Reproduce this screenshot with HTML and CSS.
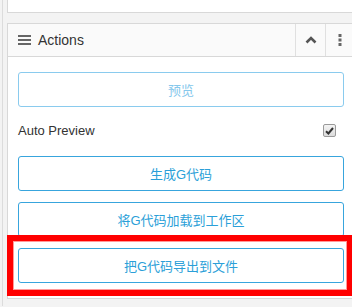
FILE: index.html
```html
<!DOCTYPE html>
<html lang="en">
<head>
    <meta charset="UTF-8">
    <meta name="viewport" content="width=device-width, initial-scale=1.0">
    <title>Actions</title>
    <link rel="stylesheet" href="styles.css">
</head>
<body>
    <div class="wrap">
        <div class="panel panel-top"></div>

        <div class="panel">
            <div class="panel-head">
                <div class="panel-title">
                    <svg class="hamburger" width="13" height="10" viewBox="0 0 13 10">
                        <rect x="0" y="0" width="13" height="2" fill="#666"/>
                        <rect x="0" y="4" width="13" height="2" fill="#666"/>
                        <rect x="0" y="8" width="13" height="2" fill="#666"/>
                    </svg>
                    <span>Actions</span>
                </div>
                <div class="head-btn">
                    <svg width="12" height="8" viewBox="0 0 12 8">
                        <path d="M1.5 6.5 L6 2 L10.5 6.5" fill="none" stroke="#555" stroke-width="2.6"/>
                    </svg>
                </div>
                <div class="head-btn">
                    <svg width="4" height="12" viewBox="0 0 4 12">
                        <rect x="0.5" y="0" width="3" height="3" fill="#666"/>
                        <rect x="0.5" y="4.5" width="3" height="3" fill="#666"/>
                        <rect x="0.5" y="9" width="3" height="3" fill="#666"/>
                    </svg>
                </div>
            </div>
            <div class="panel-body">
                <button class="btn btn-disabled">预览</button>
                <div class="check-row">
                    <span>Auto Preview</span>
                    <span class="checkbox">
                        <svg width="9" height="8" viewBox="0 0 9 8">
                            <path d="M1 4.2 L3.4 6.5 L8 1" fill="none" stroke="#333" stroke-width="2"/>
                        </svg>
                    </span>
                </div>
                <button class="btn">生成G代码</button>
                <button class="btn">将G代码加载到工作区</button>
                <button class="btn">把G代码导出到文件</button>
            </div>
        </div>
    </div>

    <div class="highlight"></div>
</body>
</html>
```

FILE: styles.css
```css
body {
    margin: 0;
    background-color: #f3f3f3;
    font-family: 'Liberation Sans', 'Noto Sans CJK SC', sans-serif;
    color: #333;
    overflow: hidden;
}
.wrap {
    margin-left: 2px;
    border-left: 1px solid #dcdcdc;
    padding-left: 4px;
    height: 307px;
}
.panel {
    width: 346px;
    background-color: #fff;
    border: 1px solid #d8d8d8;
}
.panel-top {
    height: 12px;
    margin-top: -1px;
    margin-bottom: 10px;
}
.panel-head {
    display: flex;
    height: 32px;
    background-color: #fafafa;
    border-bottom: 1px solid #d8d8d8;
}
.panel-title {
    flex: 1;
    display: flex;
    align-items: center;
    padding-left: 10px;
    font-size: 14px;
    color: #333;
}
.hamburger {
    margin-right: 7px;
}
.head-btn {
    width: 29px;
    border-left: 1px solid #e0e0e0;
    display: flex;
    justify-content: center;
    align-items: center;
}
.head-btn:last-child {
    width: 28px;
}
.panel-body {
    padding: 15px 10px 15px 10px;
}
.btn {
    display: block;
    width: 100%;
    height: 35px;
    margin: 0 0 11px 0;
    background-color: #fff;
    border: 1px solid #38a5dd;
    border-radius: 3px;
    color: #2b9fd8;
    font-family: 'Liberation Sans', 'Noto Sans CJK SC', sans-serif;
    font-size: 13px;
    cursor: pointer;
}
.btn:last-child {
    margin-bottom: 0;
}
.btn-disabled {
    border-color: #8acbee;
    color: #86c8ec;
}
.check-row {
    display: flex;
    justify-content: space-between;
    align-items: center;
    height: 25px;
    margin-bottom: 13px;
    font-size: 13px;
    color: #333;
}
.checkbox {
    width: 11px;
    height: 11px;
    margin-right: 8px;
    border: 1px solid #9a9a9a;
    border-radius: 2px;
    background: linear-gradient(#f4f4f4, #dcdcdc);
    display: flex;
    justify-content: center;
    align-items: center;
}
.highlight {
    position: absolute;
    left: 7px;
    top: 235px;
    width: 334px;
    height: 49px;
    border: 6px solid #ff0000;
    box-shadow: inset 0 0 0 1px #ff9a9a;
}
```
